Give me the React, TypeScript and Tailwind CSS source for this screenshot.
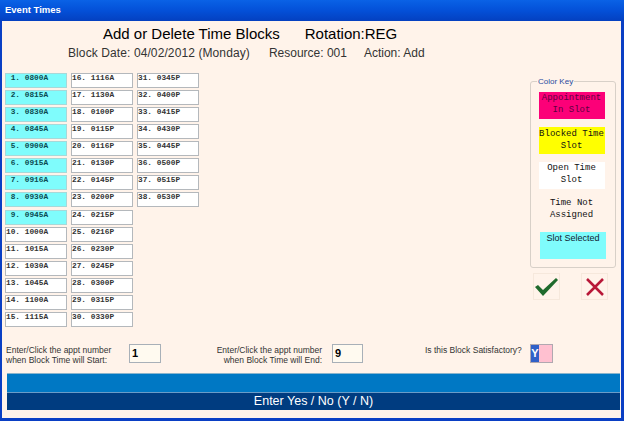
const col1 = [' 1. 0800A', ' 2. 0815A', ' 3. 0830A', ' 4. 0845A', ' 5. 0900A', ' 6. 0915A', ' 7. 0916A', ' 8. 0930A', ' 9. 0945A', '10. 1000A', '11. 1015A', '12. 1030A', '13. 1045A', '14. 1100A', '15. 1115A'];
const col2 = ['16. 1116A', '17. 1130A', '18. 0100P', '19. 0115P', '20. 0116P', '21. 0130P', '22. 0145P', '23. 0200P', '24. 0215P', '25. 0216P', '26. 0230P', '27. 0245P', '28. 0300P', '29. 0315P', '30. 0330P'];
const col3 = ['31. 0345P', '32. 0400P', '33. 0415P', '34. 0430P', '35. 0445P', '36. 0500P', '37. 0515P', '38. 0530P'];

function Slot({ label, selected }: { label: string; selected?: boolean }) {
  return (
    <div className={`w-[62px] h-[15px] border font-['Liberation_Mono',monospace] text-[7.8px] font-bold leading-[9px] whitespace-pre ${selected ? 'bg-[#7ffcfc] border-[#a8d8d8] text-[#0b4a50]' : 'bg-white border-[#b4b8bc] text-[#333]'}`}>
      {label}
    </div>
  );
}

export default function App() {
  return (
    <div className="w-[624px] h-[421px] flex flex-col bg-[#0a3fc4] font-['Liberation_Sans',sans-serif] overflow-hidden">
      <div className="h-[21px] flex items-center pl-[5px] text-[9.5px] font-bold text-white bg-gradient-to-b from-[#0a62e6] via-[#0450d8] to-[#0440c0]">Event Times</div>
      <div className="flex-1 ml-[2px] mr-[3px] mb-[3px] bg-[#fff3ea] flex flex-col">
        <div className="h-[20px] mt-[3px] flex pl-[101px] gap-[25px] text-[15px] leading-[20px] text-black">
          <span>Add or Delete Time Blocks</span>
          <span>Rotation:REG</span>
        </div>
        <div className="mt-[1px] flex pl-[66px] text-[12px] leading-[16px] text-[#333]">
          <span className="tracking-[0.1px]">Block Date: 04/02/2012 (Monday)</span>
          <span className="ml-[19px]">Resource: 001</span>
          <span className="ml-[17px]">Action: Add</span>
        </div>
        <div className="flex mt-[12px] pl-[3px] h-[254px]">
          <div className="flex gap-[4px]">
            <div className="flex flex-col gap-[2.07px]">
              {col1.map((t, i) => <Slot key={t} label={t} selected={i < 9} />)}
            </div>
            <div className="flex flex-col gap-[2.07px]">
              {col2.map((t) => <Slot key={t} label={t} />)}
            </div>
            <div className="flex flex-col gap-[2.07px]">
              {col3.map((t) => <Slot key={t} label={t} />)}
            </div>
          </div>
          <div className="ml-auto mr-[5px] w-[86px] mt-[8px]">
            <div className="relative h-[187px] border border-[#d8d0c8] rounded-[3px] flex flex-col items-center pt-[10px] pr-[3px] font-['Liberation_Mono',monospace] text-[9px] leading-[12px] text-center text-[#111]">
              <span className="absolute left-[6px] -top-[5px] px-[1px] bg-[#fff3ea] font-['Liberation_Sans',sans-serif] text-[8px] leading-[10px] text-[#2a4ca0]">Color Key</span>
              <div className="w-[66px] h-[27px] bg-[#fc0078] text-[#600040]">Appointment<br />In Slot</div>
              <div className="w-[66px] h-[27px] mt-[8px] pt-[1px] bg-[#ffff00]">Blocked Time<br />Slot</div>
              <div className="w-[66px] h-[27px] mt-[8px] bg-white">Open Time<br />Slot</div>
              <div className="w-[66px] h-[27px] mt-[8px]">Time Not<br />Assigned</div>
              <div className="w-[66px] h-[27px] mt-[8px] ml-[3px] bg-[#7ffcfc] font-['Liberation_Sans',sans-serif] text-[9px] text-[#123]">Slot Selected</div>
            </div>
            <div className="flex justify-between pl-[3px] pr-[8px] mt-[5px]">
              <div className="w-[27px] h-[27px] border border-[#f6e8dc] flex items-center justify-center">
                <svg width="25" height="20" viewBox="0 0 25 20"><path d="M1 10 L4 8 L9 13 L22 1 L24 3 L9 19 Z" fill="#1f6a2c" /></svg>
              </div>
              <div className="w-[27px] h-[27px] border border-[#f6e8dc] flex items-center justify-center">
                <svg width="22" height="22" viewBox="0 0 22 22"><path d="M3 3 L19 19 M19 3 L3 19" fill="none" stroke="#b81838" strokeWidth="2.5" /></svg>
              </div>
            </div>
          </div>
        </div>
        <div className="h-[29px] mt-[17px] flex items-start text-[8.5px] leading-[10px] text-[#333] whitespace-nowrap">
          <div className="w-[127px] pl-[4px] pt-[1px]">Enter/Click the appt number<br />when Block Time will Start:</div>
          <div className="w-[32px] h-[19px] border border-[#a8b0b8] bg-[#fffaf0] text-[11px] font-bold leading-[17px] pl-[2px] text-black">1</div>
          <div className="w-[171px] pt-[1px] text-right pr-[10px]">Enter/Click the appt number<br />when Block Time will End:</div>
          <div className="w-[31px] h-[19px] border border-[#a8b0b8] bg-[#fffaf0] text-[11px] font-bold leading-[17px] pl-[2px] text-black">9</div>
          <div className="ml-[62px] pt-[1px] w-[105px]">Is this Block Satisfactory?</div>
          <div className="w-[23px] h-[19px] flex bg-[#ffc0d0] border border-[#b0a8b0]">
            <span className="w-[8px] bg-[#3060c8] text-white text-[11px] font-bold leading-[17px] text-center">Y</span>
          </div>
        </div>
        <div className="ml-[5px] mr-[1px] h-[19px] bg-[#0078c4] border-t border-[#8ab4cc]" />
        <div className="ml-[5px] mr-[1px] h-[18px] bg-[#003c80] border-t border-[#6a9cc8] text-center text-[12.5px] leading-[17px] text-white">Enter Yes / No (Y / N)</div>
      </div>
    </div>
  );
}
